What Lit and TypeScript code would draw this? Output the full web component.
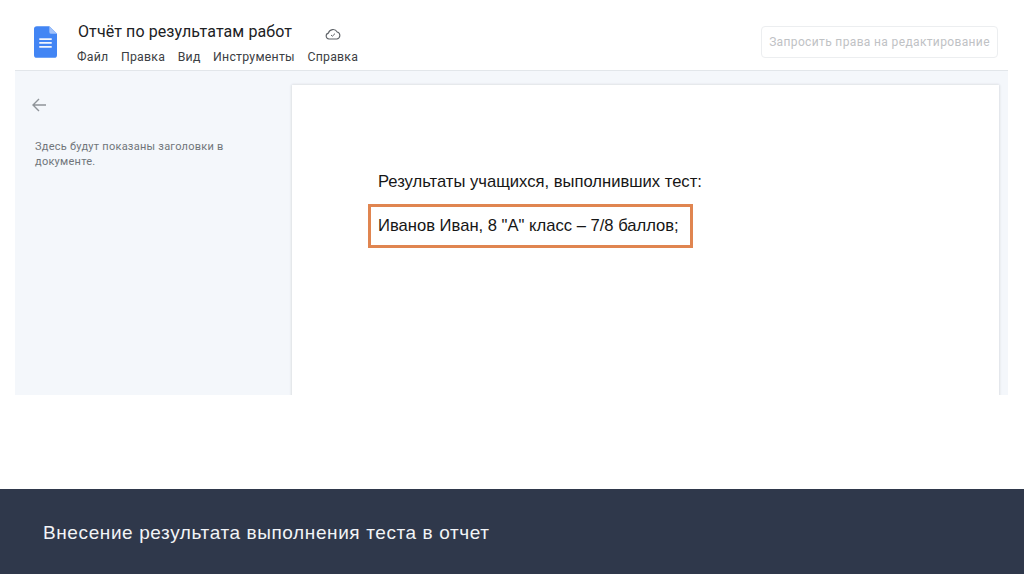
import { LitElement, html, css } from "lit";
import { customElement } from "lit/decorators.js";

@customElement("app-root")
export class AppRoot extends LitElement {
  static styles = css`
    :host { display: flex; flex-direction: column; width: 1024px; height: 574px; background: #fff; font-family: Roboto, "Noto Sans", sans-serif; overflow: hidden; }
    .shot { margin-left: 15px; width: 993px; height: 395px; display: flex; flex-direction: column; }
    .head { height: 71px; box-sizing: border-box; border-bottom: 1px solid #e2e6ea; display: flex; align-items: flex-start; flex: none; }
    .logo { width: 23px; height: 32px; margin: 26px 0 0 19px; flex: none; }
    .titles { margin-left: 20px; padding-top: 21px; flex: none; }
    .title-row { display: flex; align-items: center; height: 22px; }
    .title { font-size: 16px; line-height: 22px; color: #202124; letter-spacing: 0.1px; white-space: nowrap; margin-left: 1px; }
    .cloud { width: 16px; height: 12px; margin-left: 33px; margin-top: 3px; }
    .menu { display: flex; gap: 12.5px; margin-top: 6px; font-size: 12.3px; line-height: 16px; color: #3c4043; letter-spacing: 0.25px; white-space: nowrap; }
    .request { margin: 26px 10px 0 auto; width: 237px; height: 32px; box-sizing: border-box; border: 1px solid #eceef0; border-radius: 4px; display: flex; align-items: center; justify-content: center; font-size: 12px; letter-spacing: 0.36px; color: #bfc2c5; white-space: nowrap; }
    .main { flex: 1; display: flex; background: #f4f7fb; min-height: 0; overflow: hidden; }
    .side { width: 277px; box-sizing: border-box; padding: 26px 0 0 16px; flex: none; }
    .back { display: block; width: 16px; height: 16px; }
    .hint { margin: 26px 0 0 4px; width: 215px; font-size: 11px; line-height: 15px; color: #70757a; letter-spacing: 0.25px; }
    .page { width: 707px; height: 330px; margin-top: 14px; background: #fff; box-shadow: -1px 0 2px #e0e3e7, 1px 0 2px #e0e3e7, 0 -1px 2px #e9ecef; box-sizing: border-box; padding: 87px 0 0 86px; flex: none; }
    .line { font-family: "Liberation Sans", Arial, sans-serif; font-size: 16.6px; line-height: 20px; color: #161616; white-space: nowrap; }
    .boxed { margin: 12px 0 0 -10px; width: 325px; height: 44px; box-sizing: border-box; border: 3px solid #e08550; display: flex; align-items: center; padding-left: 7px; }
    .spacer { flex: 1; }
    .foot { height: 85px; flex: none; background: #2f384b; color: #f2f4f7; display: flex; align-items: center; padding: 3px 0 0 43px; box-sizing: border-box; font-family: "Liberation Sans", Arial, sans-serif; font-size: 19px; letter-spacing: 0.6px; }
  `;

  render() {
    return html`
      <div class="shot">
        <div class="head">
          <svg class="logo" viewBox="0 0 24 33">
            <path d="M3 0H16L24 8V30a3 3 0 0 1-3 3H3a3 3 0 0 1-3-3V3a3 3 0 0 1 3-3z" fill="#4285f4"/>
            <path d="M16 0L24 8H18a2 2 0 0 1-2-2z" fill="#a1c2fa"/>
            <path d="M5.5 13.5H18.5M5.5 17.5H18.5M5.5 21.5H18.5" stroke="#f1f5fd" stroke-width="1.8" fill="none"/>
          </svg>
          <div class="titles">
            <div class="title-row">
              <span class="title">Отчёт по результатам работ</span>
              <svg class="cloud" viewBox="0 0 16 12">
                <path d="M4 11a3 3 0 0 1-.6-5.9A4.8 4.8 0 0 1 12.2 4 3.6 3.6 0 0 1 12 11z" fill="none" stroke="#5f6368" stroke-width="1.1"/>
                <path d="M6 7l1.4 1.2L10 5.6" fill="none" stroke="#5f6368" stroke-width="1"/>
              </svg>
            </div>
            <div class="menu">
              <span>Файл</span><span>Правка</span><span>Вид</span><span>Инструменты</span><span>Справка</span>
            </div>
          </div>
          <div class="request">Запросить права на редактирование</div>
        </div>
        <div class="main">
          <div class="side">
            <svg class="back" viewBox="0 0 16 16">
              <path d="M15 8H2M8 2L2 8l6 6" fill="none" stroke="#8f9499" stroke-width="1.4"/>
            </svg>
            <div class="hint">Здесь будут показаны заголовки в документе.</div>
          </div>
          <div class="page">
            <div class="line">Результаты учащихся, выполнивших тест:</div>
            <div class="line boxed">Иванов Иван, 8 "А" класс – 7/8 баллов;</div>
          </div>
        </div>
      </div>
      <div class="spacer"></div>
      <div class="foot">Внесение результата выполнения теста в отчет</div>
    `;
  }
}
